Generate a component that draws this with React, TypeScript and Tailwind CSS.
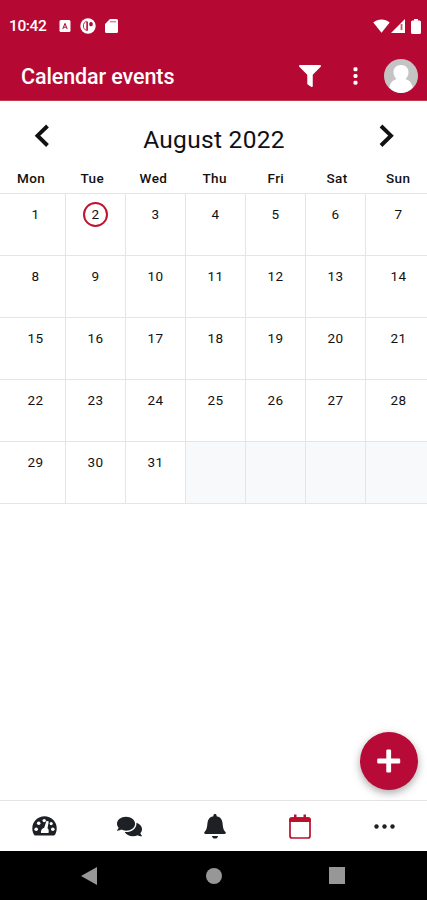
import React from 'react';
import { FaComments, FaFilter } from 'react-icons/fa';

const weekDays = ['Mon', 'Tue', 'Wed', 'Thu', 'Fri', 'Sat', 'Sun'];
const TODAY = 2;
const DAYS_IN_MONTH = 31;
const cells = Array.from({ length: 35 }, (_, i) => (i < DAYS_IN_MONTH ? i + 1 : null));

const StatusBar: React.FC = () => (
  <div className="flex h-[52px] items-center pl-[9px] pr-[6px]">
    <span className="w-[50px] pt-[2px] text-[15.5px] font-medium leading-none tracking-[-0.4px]">10:42</span>
    {/* Notification icons */}
    <svg className="h-3 w-3" viewBox="0 0 12 12">
      <rect x="0.5" width="11" height="12" rx="1.5" fill="currentColor" />
      <path d="M3.8 9 6 3.4 8.2 9M4.6 7.2h2.8" stroke="#b50934" strokeWidth="1" fill="none" />
    </svg>
    <svg className="ml-[9px] h-4 w-4" viewBox="0 0 16 16">
      <circle cx="8" cy="8" r="7.7" fill="currentColor" />
      <path d="M6.500 3.400C4.500 4 3.400 5.600 3.400 7.900c0 2.200 1.200 3.900 3.100 4.600" fill="none" stroke="#b50934" strokeWidth="0.900" />
      <path d="M6.300 3.400h1.600v9.400H6.300z" fill="#b50934" />
      <rect x="9.300" y="4" width="3.400" height="4.200" rx="1.500" fill="#b50934" />
    </svg>
    <svg className="ml-[9px] h-[14px] w-[13px]" viewBox="0 0 13 14">
      <path d="M5 0h6.500A1.500 1.500 0 0 1 13 1.500v11a1.500 1.500 0 0 1-1.500 1.500h-10A1.500 1.500 0 0 1 0 12.500V5z" fill="currentColor" />
      <path d="M5 2.700h6" stroke="#b50934" strokeWidth="1.400" opacity="0.5" />
    </svg>
    {/* Connection and battery */}
    <svg className="ml-auto h-[14px] w-[17px]" viewBox="0 0 17 14">
      <path d="M0.300 3.600C4.800-.5 12.200-.5 16.700 3.600L8.500 13.700z" fill="currentColor" />
    </svg>
    <svg className="ml-[1px] h-[14px] w-[14px]" viewBox="0 0 14 14">
      <path d="M0 14 14 0v14z" fill="currentColor" />
      <path d="M10.500 5v6" stroke="#b50934" strokeWidth="1.800" opacity="0.7" />
    </svg>
    <svg className="ml-[6px] h-[15px] w-[10px]" viewBox="0 0 10 15">
      <path d="M3 0h4v1.500h1.500A1.500 1.500 0 0 1 10 3v10.500A1.500 1.500 0 0 1 8.500 15h-7A1.500 1.500 0 0 1 0 13.500V3a1.500 1.500 0 0 1 1.500-1.500H3z" fill="currentColor" />
    </svg>
  </div>
);

const Toolbar: React.FC = () => (
  <div className="flex h-12 items-center pl-[21px] pr-[9px]">
    <h1 className="pt-[1px] text-[21.500px] font-medium leading-none tracking-[-0.100px]">Calendar events</h1>
    <button className="ml-auto" aria-label="Filter">
      <FaFilter className="h-[22px] w-[22px]" />
    </button>
    <button className="ml-[32px]" aria-label="More options">
      <svg className="h-[18px] w-[5px]" viewBox="0 0 5 18" fill="currentColor">
        <rect x="0.500" y="0.300" width="4" height="4" rx="1.400" />
        <rect x="0.500" y="7" width="4" height="4" rx="1.400" />
        <rect x="0.500" y="13.700" width="4" height="4" rx="1.400" />
      </svg>
    </button>
    <svg className="ml-[26px] h-[34px] w-[34px]" viewBox="0 0 34 34">
      <circle cx="17" cy="17" r="17" fill="#c4c4c4" />
      <path d="M17 6c4.800 0 7.800 3.300 7.500 7.700-.2 3-1.600 5-3.200 6.300 3.600.8 6.300 3.300 7.400 8.400A17 17 0 0 1 17 34a17 17 0 0 1-11.700-5.600c1.100-5.100 3.800-7.600 7.400-8.400-1.600-1.300-3-3.300-3.200-6.300C9.200 9.300 12.200 6 17 6z" fill="#fff" />
    </svg>
  </div>
);

const Chevron: React.FC<{ points: string; label: string }> = ({ points, label }) => (
  <button aria-label={label}>
    <svg className="h-[24px] w-[16px]" viewBox="0 0 16 24" fill="none" stroke="currentColor" strokeWidth="3.900">
      <polyline points={points} />
    </svg>
  </button>
);

const Calendar: React.FC = () => (
  <section className="text-[#111]">
    <div className="flex h-[69px] items-center justify-between pl-[34px] pr-[33px]">
      <Chevron label="Previous month" points="13.500,2 3.500,11.700 13.500,21.500" />
      <h2 className="pt-[10px] text-[24.500px] leading-none tracking-[0.3px]">August 2022</h2>
      <Chevron label="Next month" points="3,2 13,11.700 3,21.500" />
    </div>
    <div className="grid h-[23px] grid-cols-[repeat(7,61.2px)] pl-[0.500px] text-center text-[13.500px] font-medium leading-[17px] tracking-[0.4px]">
      {weekDays.map((day) => (
        <div key={day}>{day}</div>
      ))}
    </div>
    <div className="grid grid-cols-[65px_60px_60px_60px_60px_60px_62px] grid-rows-[repeat(5,62px)] border-b border-[#e3e6e8]">
      {cells.map((day, i) => (
        <div
          key={i}
          className={`flex justify-center border-t border-[#e3e6e8] pt-[8px] ${i % 7 === 0 ? 'pl-[6px]' : 'border-l'} ${i % 7 === 6 ? 'pl-[4px]' : ''} ${day ? '' : 'bg-[#f8f9fb]'}`}
        >
          {day && (
            <span
              className={`flex h-[25px] w-[25px] items-center justify-center rounded-full text-[13.500px] tracking-[0.500px] ${day === TODAY ? 'border-2 border-[#bd1530]' : ''}`}
            >
              {day}
            </span>
          )}
        </div>
      ))}
    </div>
  </section>
);

const GaugeIcon: React.FC = () => (
  <svg className="h-[20px] w-[25px]" viewBox="0 0 25 20">
    <path d="M12.500.3A12.200 12.200 0 0 0 .3 12.500c0 2.200.6 4.300 1.600 6 .3.600.8.900 1.400.900h18.400c.6 0 1.100-.3 1.400-.900 1-1.700 1.600-3.800 1.600-6A12.200 12.200 0 0 0 12.500.3z" fill="currentColor" />
    <g fill="#fff">
      <circle cx="4.200" cy="13.200" r="1.800" />
      <circle cx="6.700" cy="7.200" r="1.800" />
      <circle cx="12.200" cy="4.600" r="1.700" />
      <circle cx="19.200" cy="7.600" r="1.600" />
      <circle cx="20.800" cy="13.200" r="1.800" />
      <path d="M14.500 4.700l2.300.8-1.300 6.800c1.100.9 1.600 2.500 1 4.600H9c-.5-2.300.8-4.500 3.200-5.200z" />
    </g>
  </svg>
);

const BellIcon: React.FC = () => (
  <svg className="h-[25px] w-[22px]" viewBox="0 0 22 25" fill="currentColor">
    <path d="M11 0c1 0 1.600.7 1.600 1.500v.7c3.700.7 5.700 3.200 6 7.200.4 4.800 1 6.600 2.900 8.500.7.800.3 2-.9 2H1.400c-1.200 0-1.600-1.200-.9-2 1.900-1.900 2.500-3.700 2.900-8.500.3-4 2.300-6.500 6-7.200v-.7C9.400.7 10 0 11 0z" />
    <path d="M8 21.900h6c-.2 1.700-1.400 2.600-3 2.600s-2.800-.9-3-2.600z" />
  </svg>
);

const TabBar: React.FC = () => (
  <nav className="grid h-[51px] grid-cols-5 place-items-center border-t border-[#e4e4e4] bg-white pl-[2px] text-[#1d2125]">
    <GaugeIcon />
    <FaComments className="h-[25px] w-[25px]" />
    <BellIcon />
    <svg className="h-[25px] w-[22px] text-[#bb102c]" viewBox="0 0 22 25">
      <rect x="1" y="4" width="20" height="20" rx="2" fill="none" stroke="currentColor" strokeWidth="1.700" />
      <path d="M.2 8V5.500A2.500 2.500 0 0 1 3 3.200h2V.5h2.500v2.700h7V.5H17v2.700h2a2.500 2.500 0 0 1 2.800 2.300V8z" fill="currentColor" />
    </svg>
    <svg className="h-[5px] w-[21px]" viewBox="0 0 21 5" fill="currentColor">
      <circle cx="2.500" cy="2.500" r="2.200" />
      <circle cx="10.500" cy="2.500" r="2.200" />
      <circle cx="18.500" cy="2.500" r="2.200" />
    </svg>
  </nav>
);

const SystemBar: React.FC = () => (
  <div className="flex h-[49px] items-center bg-black pl-[81px] text-[#979797]">
    <svg className="h-[18px] w-4" viewBox="0 0 16 18">
      <path d="M16 0v18L0 9z" fill="currentColor" />
    </svg>
    <div className="ml-[109px] h-4 w-4 rounded-full bg-[#979797]" />
    <div className="ml-[107px] h-[17px] w-4 bg-[#979797]" />
  </div>
);

const App: React.FC = () => {
  return (
    <div className="relative flex h-[900px] w-[427px] flex-col overflow-hidden bg-white font-['Roboto',sans-serif]">
      <header className="h-[101px] shrink-0 border-b border-[#c33a50] bg-[#b50934] text-white">
        <StatusBar />
        <Toolbar />
      </header>
      <main className="flex-1">
        <Calendar />
      </main>
      <button
        aria-label="New event"
        className="absolute bottom-[110px] right-[9px] flex h-[58px] w-[58px] items-center justify-center rounded-full bg-[#b80a36] text-white shadow-[0_3px_8px_rgba(0,0,0,0.35)]"
      >
        <svg className="h-[24px] w-[24px]" viewBox="0 0 24 24" fill="currentColor">
          <rect x="9.300" y="0.500" width="4.800" height="23" rx="1.200" />
          <rect x="0.200" y="9.600" width="23" height="4.800" rx="1.200" />
        </svg>
      </button>
      <TabBar />
      <SystemBar />
    </div>
  );
};

export default App;
